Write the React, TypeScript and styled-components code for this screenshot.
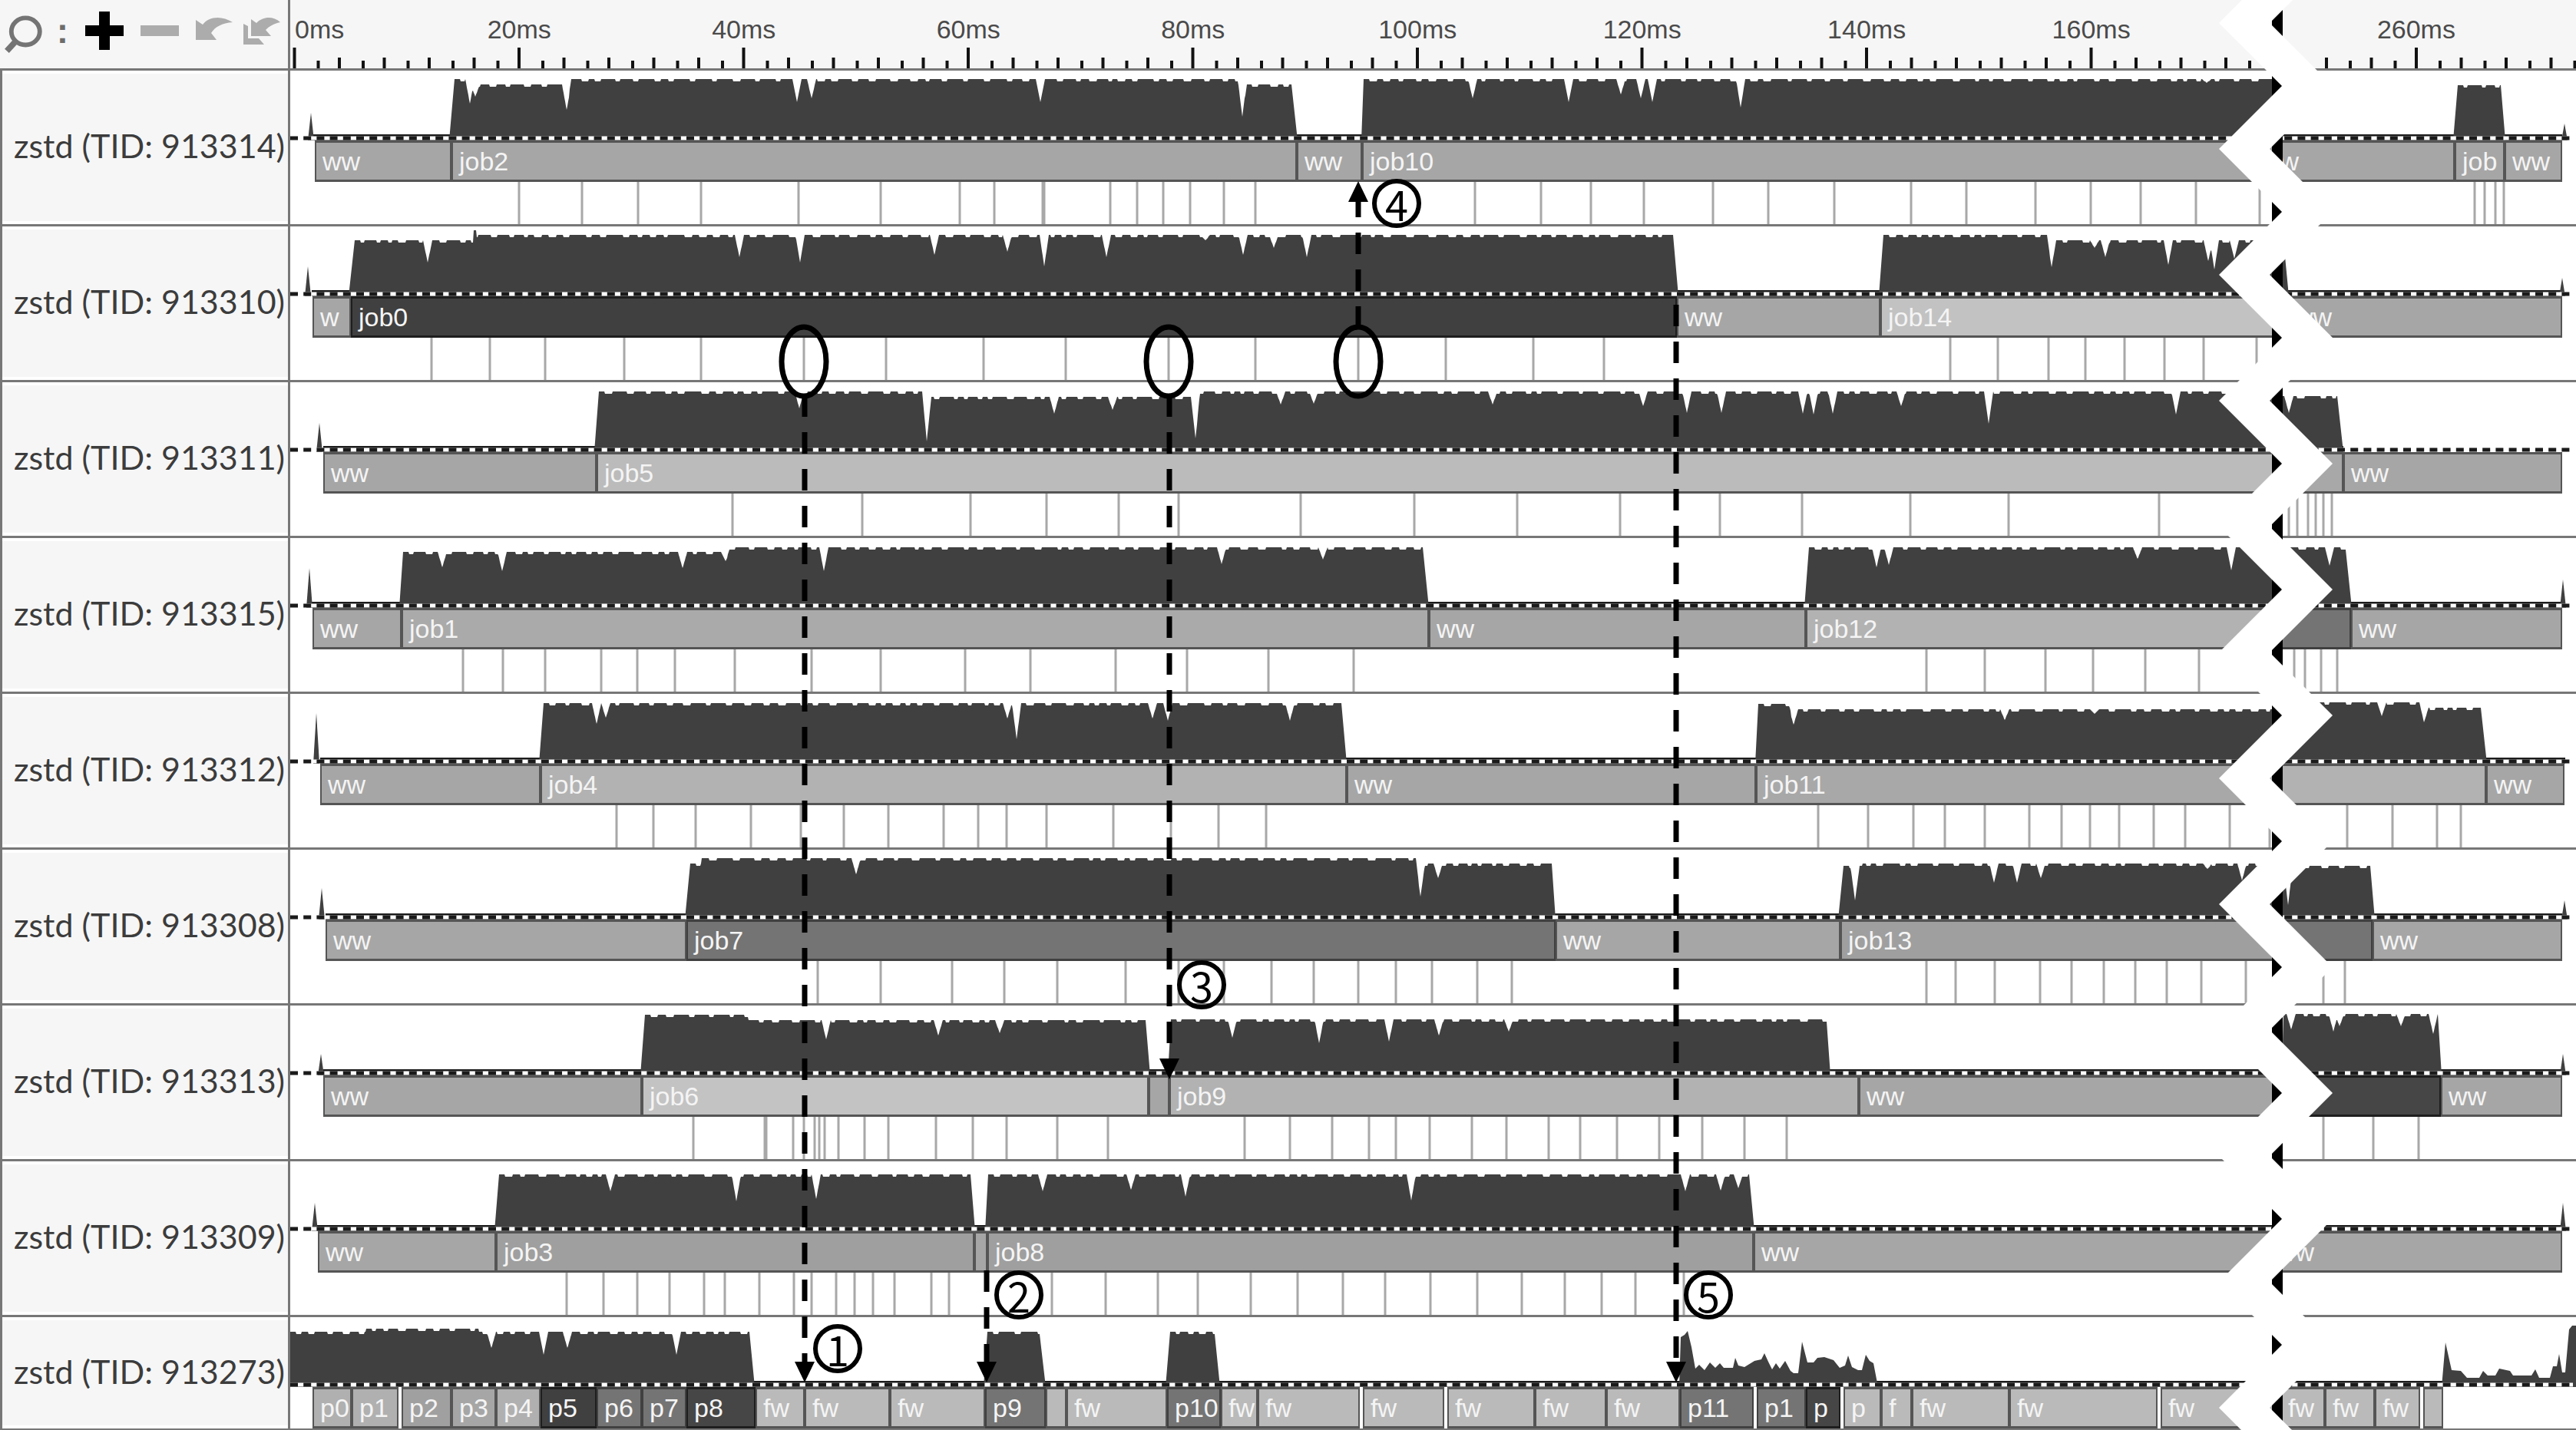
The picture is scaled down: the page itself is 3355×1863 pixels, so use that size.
import React from "react";
import styled, { createGlobalStyle } from "styled-components";

/* ---------- time axis ---------- */

const GUTTER = 378;
const SPAN = 2977;
const END = GUTTER + SPAN;
const WAVE_H = 91;

const pct = (x: number) => `${((x - GUTTER) / SPAN) * 100}%`;
const columns = (spans: number[]) => spans.map((s) => `minmax(0, ${s}fr)`).join(" ");

/* ---------- data ---------- */

type Pair = [number, number];

interface Segment {
  to: number;
  label?: string;
  tone?: string;
  gap?: boolean;
}

interface Block {
  edge: [number, number, number, number];
  levels: Pair[];
  dips: Pair[];
}

interface Thread {
  tid: number;
  start: number;
  segments: Segment[];
  band: Pair;
  spikes: Pair[];
  blocks: Block[];
  shapes?: Pair[][];
  ticks: number[];
  wideTick?: number;
}

const WAIT = "#a6a6a6";
const WRITE = "#bababa";
const MID = "#747474";
const DARK = "#404040";

const threads: Thread[] = [
  {
    tid: 913314,
    start: 410,
    segments: [
      { to: 588, label: "ww" },
      { to: 1689, label: "job2" },
      { to: 1774, label: "ww" },
      { to: 2935, label: "job10" },
      { to: 3197, label: "ww" },
      { to: 3262, label: "job" },
      { to: 3337, label: "ww" },
    ],
    band: [406, 3337],
    spikes: [[405, 55], [3340, 69]],
    blocks: [
      {
        edge: [585, 592, 1682, 1690],
        levels: [[0, 11], [616, 18], [742, 11], [1622, 18]],
        dips: [[612, 43], [619, 34], [738, 51], [1038, 41], [1057, 36], [1355, 41], [1618, 60]],
      },
      {
        edge: [1773, 1776, 2966, 2970],
        levels: [[0, 11]],
        dips: [[1918, 36], [2043, 41], [2111, 31], [2137, 36], [2152, 41], [2267, 48], [2874, 16]],
      },
      { edge: [3195, 3201, 3257, 3263], levels: [[0, 19]], dips: [] },
    ],
    ticks: [676, 758, 831, 913, 1040, 1147, 1250, 1295, 1446, 1481, 1515, 1550, 1594, 1635, 1921, 2007, 2072, 2141, 2231, 2303, 2389, 2489, 2561, 2651, 2723, 2788, 2860, 2943, 3223, 3236, 3250, 3261],
    wideTick: 1359,
  },
  {
    tid: 913310,
    start: 407,
    segments: [
      { to: 457, label: "w" },
      { to: 2184, label: "job0", tone: DARK },
      { to: 2449, label: "ww" },
      { to: 2978, label: "job14", tone: "#c2c2c2" },
      { to: 3337, label: "ww" },
    ],
    band: [406, 3337],
    spikes: [[401, 52], [3337, 67]],
    blocks: [
      {
        edge: [454, 462, 2179, 2186],
        levels: [[0, 18], [617, 2], [621, 11]],
        dips: [[557, 47], [963, 40], [1042, 47], [1217, 37], [1312, 33], [1360, 52], [1441, 40], [1570, 18], [1619, 37], [1659, 28], [1702, 40]],
      },
      {
        edge: [2447, 2453, 2974, 2981],
        levels: [[0, 11], [2670, 18]],
        dips: [[2672, 53], [2728, 28], [2742, 40], [2824, 50], [2876, 45], [2884, 56], [2910, 42]],
      },
    ],
    ticks: [562, 638, 710, 813, 913, 1047, 1154, 1281, 1388, 1522, 1635, 1769, 1883, 1997, 2089, 2540, 2602, 2668, 2716, 2767, 2819, 2870, 2939],
  },
  {
    tid: 913311,
    start: 421,
    segments: [
      { to: 777, label: "ww" },
      { to: 2965, label: "job5", tone: "#bbbbbb" },
      { to: 3052, tone: "#a8a8a8" },
      { to: 3337, label: "ww" },
    ],
    band: [421, 3052],
    spikes: [[416, 53]],
    blocks: [
      {
        edge: [774, 780, 3044, 3052],
        levels: [[0, 12], [1208, 19], [1560, 12], [2968, 18]],
        dips: [[1041, 34], [1207, 77], [1373, 41], [1449, 36], [1557, 73], [1668, 29], [1711, 28], [1944, 29], [2140, 31], [2197, 40], [2242, 40], [2348, 41], [2362, 42], [2387, 41], [2476, 31], [2590, 54], [2834, 42], [2981, 40]],
      },
    ],
    ticks: [954, 1123, 1264, 1363, 1457, 1535, 1694, 1842, 1976, 2110, 2240, 2347, 2488, 2616, 2812, 2981, 2992, 3006, 3016, 3026, 3037],
  },
  {
    tid: 913315,
    start: 407,
    segments: [
      { to: 523, label: "ww" },
      { to: 1861, label: "job1", tone: "#aaaaaa" },
      { to: 2352, label: "ww" },
      { to: 2955, label: "job12", tone: "#b2b2b2" },
      { to: 3062, tone: MID },
      { to: 3337, label: "ww" },
    ],
    band: [406, 3337],
    spikes: [[403, 39], [3338, 54]],
    blocks: [
      {
        edge: [520, 525, 1853, 1861],
        levels: [[0, 18], [948, 12]],
        dips: [[576, 38], [654, 43], [889, 39], [945, 30], [1073, 43], [1591, 34], [1723, 28]],
      },
      {
        edge: [2350, 2356, 3055, 3063],
        levels: [[0, 12]],
        dips: [[2444, 38], [2460, 35], [2784, 27], [2906, 42], [3034, 36]],
      },
    ],
    ticks: [603, 655, 710, 783, 830, 879, 957, 1057, 1147, 1257, 1342, 1453, 1546, 1652, 1763, 2509, 2585, 2664, 2726, 2794, 2864, 2988, 3002, 3023, 3044],
  },
  {
    tid: 913312,
    start: 417,
    segments: [
      { to: 704, label: "ww" },
      { to: 1754, label: "job4", tone: "#b2b2b2" },
      { to: 2287, label: "ww" },
      { to: 2948, label: "job11", tone: "#a8a8a8" },
      { to: 3238, tone: "#b2b2b2" },
      { to: 3340, label: "ww" },
    ],
    band: [417, 3341],
    spikes: [[412, 25]],
    blocks: [
      {
        edge: [702, 708, 1747, 1754],
        levels: [[0, 12]],
        dips: [[777, 39], [789, 31], [1312, 32], [1324, 59], [1501, 32], [1521, 35], [1680, 35]],
      },
      {
        edge: [2286, 2290, 3231, 3239],
        levels: [[0, 13], [2333, 20], [2980, 11], [3157, 18]],
        dips: [[2336, 40], [2611, 34], [2728, 26], [3102, 29], [3157, 37]],
      },
    ],
    ticks: [803, 851, 906, 978, 1043, 1099, 1157, 1229, 1274, 1311, 1363, 1450, 1525, 1587, 1649, 2368, 2433, 2492, 2533, 2585, 2643, 2685, 2722, 2760, 2805, 2846, 2904, 2956, 3057, 3116, 3174, 3205],
  },
  {
    tid: 913308,
    start: 424,
    segments: [
      { to: 894, label: "ww" },
      { to: 2026, label: "job7", tone: MID },
      { to: 2397, label: "ww" },
      { to: 2968, label: "job13", tone: "#9f9f9f" },
      { to: 3090, tone: MID },
      { to: 3337, label: "ww" },
    ],
    band: [424, 3337],
    spikes: [[419, 50], [3340, 66]],
    blocks: [
      {
        edge: [892, 899, 2021, 2026],
        levels: [[0, 18], [914, 11], [1848, 18]],
        dips: [[1115, 32], [1850, 61], [1873, 37]],
      },
      {
        edge: [2394, 2401, 3087, 3093],
        levels: [[0, 21], [2426, 18], [2970, 21]],
        dips: [[2416, 66], [2597, 43], [2627, 43], [2658, 37], [2875, 25], [2920, 40], [2980, 72]],
      },
    ],
    ticks: [1065, 1147, 1240, 1308, 1377, 1466, 1535, 1594, 1656, 1711, 1769, 1818, 1865, 1924, 1969, 2509, 2547, 2598, 2657, 2698, 2740, 2781, 2822, 2867, 2925, 3026, 3054],
  },
  {
    tid: 913313,
    start: 421,
    segments: [
      { to: 836, label: "ww" },
      { to: 1496, label: "job6", tone: "#c3c3c3" },
      { to: 1523 },
      { to: 2421, label: "job9", tone: "#b2b2b2" },
      { to: 2980, label: "ww" },
      { to: 3179, tone: "#464646" },
      { to: 3337, label: "ww" },
    ],
    band: [421, 3337],
    spikes: [[418, 63], [3338, 63]],
    blocks: [
      {
        edge: [834, 840, 1492, 1498],
        levels: [[0, 12], [975, 19]],
        dips: [[1076, 44], [1222, 39], [1302, 36]],
      },
      {
        edge: [1521, 1525, 2379, 2384],
        levels: [[0, 18]],
        dips: [[1605, 42], [1718, 49], [1809, 47], [1874, 39], [1965, 34]],
      },
      {
        edge: [2972, 2974, 3175, 3180],
        levels: [[0, 11]],
        dips: [[2984, 31], [3039, 34], [3047, 27], [3127, 27], [3169, 37]],
      },
    ],
    ticks: [903, 1033, 1047, 1061, 1067, 1074, 1092, 1126, 1157, 1219, 1267, 1311, 1377, 1443, 1621, 1680, 1735, 1783, 1818, 1862, 1917, 1962, 2017, 2058, 2106, 2161, 2217, 2272, 2327, 3026, 3091, 3150],
    wideTick: 997,
  },
  {
    tid: 913309,
    start: 414,
    segments: [
      { to: 646, label: "ww" },
      { to: 1269, label: "job3", tone: "#9f9f9f" },
      { to: 1286 },
      { to: 2284, label: "job8", tone: "#9f9f9f" },
      { to: 2955, label: "ww" },
      { to: 3337, label: "ww" },
    ],
    band: [412, 3337],
    spikes: [[410, 54], [3338, 54]],
    blocks: [
      {
        edge: [644, 650, 1264, 1270],
        levels: [[0, 17]],
        dips: [[795, 39], [959, 52], [1063, 49]],
      },
      {
        edge: [1283, 1287, 2278, 2285],
        levels: [[0, 17]],
        dips: [[1358, 39], [1473, 37], [1544, 46], [1838, 51], [2195, 39], [2241, 38], [2264, 35]],
      },
    ],
    ticks: [738, 786, 830, 872, 917, 944, 989, 1034, 1057, 1089, 1113, 1137, 1165, 1213, 1236, 1370, 1440, 1508, 1560, 1629, 1690, 1749, 1804, 1863, 1924, 1982, 2038, 2086, 2130, 2193],
  },
  {
    tid: 913273,
    start: 407,
    segments: [
      { to: 458, label: "p0", tone: "#b0b0b0" },
      { to: 519, label: "p1", tone: "#b0b0b0" },
      { to: 523, gap: true },
      { to: 588, label: "p2", tone: "#a0a0a0" },
      { to: 646, label: "p3", tone: WAIT },
      { to: 704, label: "p4", tone: "#b0b0b0" },
      { to: 777, label: "p5", tone: DARK },
      { to: 836, label: "p6", tone: MID },
      { to: 894, label: "p7", tone: MID },
      { to: 984, label: "p8", tone: "#464646" },
      { to: 1048, label: "fw", tone: WRITE },
      { to: 1159, label: "fw", tone: WRITE },
      { to: 1283, label: "fw", tone: WRITE },
      { to: 1362, label: "p9", tone: MID },
      { to: 1389, tone: WRITE },
      { to: 1520, label: "fw", tone: WRITE },
      { to: 1590, label: "p10", tone: MID },
      { to: 1638, label: "fw", tone: WRITE },
      { to: 1771, label: "fw", tone: WRITE },
      { to: 1775, gap: true },
      { to: 1881, label: "fw", tone: WRITE },
      { to: 1885, gap: true },
      { to: 1999, label: "fw", tone: WRITE },
      { to: 2092, label: "fw", tone: WRITE },
      { to: 2188, label: "fw", tone: WRITE },
      { to: 2284, label: "p11", tone: MID },
      { to: 2288, gap: true },
      { to: 2352, label: "p1", tone: MID },
      { to: 2397, label: "p", tone: "#464646" },
      { to: 2401, gap: true },
      { to: 2450, label: "p", tone: WRITE },
      { to: 2490, label: "f", tone: WRITE },
      { to: 2617, label: "fw", tone: WRITE },
      { to: 2810, label: "fw", tone: WRITE },
      { to: 2814, gap: true },
      { to: 2970, label: "fw", tone: WRITE },
      { to: 3028, label: "fw", tone: WRITE },
      { to: 3093, label: "fw", tone: WRITE },
      { to: 3152, label: "fw", tone: WRITE },
      { to: 3156, gap: true },
      { to: 3182, tone: WRITE },
    ],
    band: [406, 3181],
    spikes: [],
    blocks: [
      {
        edge: [378, 378, 976, 983],
        levels: [[0, 19], [477, 15], [624, 19]],
        dips: [[640, 40], [708, 49], [739, 40], [881, 49]],
      },
      { edge: [1281, 1286, 1354, 1362], levels: [[0, 19]], dips: [] },
      { edge: [1518, 1524, 1582, 1589], levels: [[0, 19]], dips: [] },
    ],
    shapes: [
      [[2187, 91], [2189, 26], [2194, 23], [2198, 18], [2203, 39], [2208, 67], [2213, 62], [2220, 69], [2227, 59], [2234, 66], [2240, 60], [2245, 66], [2257, 66], [2260, 53], [2264, 63], [2272, 65], [2285, 57], [2294, 55], [2298, 47], [2303, 58], [2308, 68], [2313, 60], [2318, 67], [2325, 57], [2332, 70], [2336, 73], [2342, 73], [2347, 32], [2354, 59], [2362, 59], [2367, 53], [2376, 52], [2388, 56], [2396, 66], [2403, 63], [2407, 50], [2412, 65], [2420, 69], [2425, 69], [2430, 49], [2435, 57], [2440, 60], [2446, 91]],
      [[3180, 91], [3185, 33], [3193, 69], [3205, 70], [3213, 79], [3229, 79], [3234, 70], [3240, 76], [3250, 76], [3255, 67], [3269, 70], [3273, 76], [3297, 76], [3302, 68], [3307, 79], [3321, 79], [3325, 64], [3330, 64], [3333, 48], [3337, 72], [3341, 72], [3346, 16], [3350, 11], [3355, 11], [3355, 91]],
    ],
    ticks: [],
  },
];

/* ---------- drawing helpers ---------- */

const toPath = (pts: Pair[]) => `M${pts.map((p) => p.join(" ")).join("L")}Z`;

function blockPath({ edge, levels, dips }: Block) {
  const [x0, x1, x2, x3] = edge;
  let seed = x0 * 7919 + x3;
  const random = () => {
    seed = (seed * 16807 + 11) % 2147483647;
    return seed / 2147483647;
  };
  const pts: Pair[] = [[x0, WAVE_H]];
  let notch = 0;
  let next = x1 + 8;
  for (let x = x1; x <= x2; x += 1) {
    if (x >= next) {
      notch = notch ? 0 : 3;
      next = x + (notch ? 4 + random() * 6 : 6 + random() * 16);
    }
    let base = levels[0][1];
    for (const [from, y] of levels) if (x >= from) base = y;
    let y = base + notch;
    for (const [dx, dy] of dips) {
      const reach = 1 - Math.abs(x - dx) / 6;
      if (reach > 0) y = Math.max(y, Math.round(base + (dy - base) * reach));
    }
    pts.push([x, y]);
  }
  pts.push([x3, WAVE_H]);
  return toPath(pts);
}

function edgeTone(tone: string) {
  if (tone === DARK || tone === "#464646") return "#1e1e1e";
  return tone === MID ? "#404040" : "#555555";
}

/* ---------- styled parts ---------- */

const Global = createGlobalStyle`
  *, *::before, *::after { box-sizing: border-box; }
  body { margin: 0; background: #fff; overflow-x: hidden; }
`;

const Board = styled.main`
  position: relative;
  display: grid;
  grid-template-columns: ${GUTTER}px minmax(0, 1fr);
  width: 100%;
  overflow: hidden;
  font-family: "Liberation Sans", Arial, sans-serif;
  color: #3c3c3c;
  background: #fff;
`;

const Toolbar = styled.div`
  display: flex;
  align-items: center;
  gap: 22px;
  height: 92px;
  padding: 0 0 10px 6px;
  background: #f6f6f6;
  border-right: 3px solid #777;
  border-bottom: 3px solid #777;
`;

const ZoomCaption = styled.div`
  display: flex;
  align-items: center;
  width: 83px;
  gap: 18px;
  font-size: 46px;
  line-height: 50px;
  font-weight: 700;
  color: #6c6c6c;
`;

const UndoGroup = styled.div`
  display: flex;
  gap: 14px;
`;

const IconButton = styled.button`
  display: block;
  flex: none;
  padding: 0;
  border: 0;
  background: none;
  line-height: 0;
  cursor: pointer;
  color: #000;

  &:disabled {
    color: #acacac;
    cursor: default;
  }
`;

const Ruler = styled.div`
  display: flex;
  flex-direction: column;
  height: 92px;
  padding-top: 16px;
  background: #f6f6f6;
  border-bottom: 3px solid #777;
`;

const RulerLabels = styled.div<{ $columns: string }>`
  display: grid;
  grid-template-columns: ${(p) => p.$columns};
  height: 44px;
`;

const RulerLabel = styled.span<{ $first?: boolean }>`
  padding-left: ${(p) => (p.$first ? 6 : 0)}px;
  text-align: ${(p) => (p.$first ? "left" : "center")};
  font-size: 34px;
  line-height: 44px;
  color: #4a4a4a;
`;

const RulerTicks = styled.svg`
  display: block;
  width: 100%;
  height: 29px;
`;

const NameCell = styled.div<{ $last: boolean }>`
  display: flex;
  align-items: center;
  padding: 0 0 4px 15px;
  border: solid #777;
  border-width: 0 3px ${(p) => (p.$last ? 2 : 3)}px 3px;
  background: #f6f6f6;
  box-shadow: inset 0 4px 0 #fff, inset 0 -4px 0 #fff;
  font-family: Lato, "Noto Sans", sans-serif;
  font-size: 43px;
  line-height: 50px;
  white-space: nowrap;
`;

const Lane = styled.div<{ $last: boolean }>`
  height: ${(p) => (p.$last ? 147 : 203)}px;
  border-bottom: ${(p) => (p.$last ? 2 : 3)}px solid #777;
`;

const Wave = styled.svg`
  display: block;
  width: 100%;
  height: ${WAVE_H}px;
`;

const Slices = styled.div<{ $columns: string }>`
  display: grid;
  grid-template-columns: ${(p) => p.$columns};
  height: 54px;
`;

const Slice = styled.div<{ $tone: string }>`
  padding-left: 8px;
  overflow: hidden;
  border: solid ${(p) => edgeTone(p.$tone)};
  border-width: 3px 2px;
  background: ${(p) => p.$tone};
  color: #f4f4f4;
  font-size: 34px;
  line-height: 48px;
  white-space: nowrap;
`;

const Marks = styled.svg`
  display: block;
  width: 100%;
  height: 55px;
`;

const Overlay = styled.div`
  position: absolute;
  inset: 0 0 0 ${GUTTER}px;
  pointer-events: none;
`;

const OverlayArt = styled.svg`
  display: block;
  width: 100%;
  height: 100%;
`;

const Badge = styled.span`
  position: absolute;
  display: flex;
  align-items: center;
  justify-content: center;
  width: 64px;
  height: 64px;
  margin: -32px 0 0 -32px;
  border: 6px solid #000;
  border-radius: 50%;
  color: #000;
  font-family: "Noto Sans CJK JP", "Noto Sans", sans-serif;
  font-size: 54px;
  line-height: 52px;
`;

/* ---------- pieces ---------- */

const axisLabels: { text?: string; span: number; first?: boolean }[] = [
  { text: "0ms", span: 152, first: true },
  ...[20, 40, 60, 80, 100, 120, 140, 160].map((n) => ({ text: `${n}ms`, span: 292.4 })),
  { span: 131 },
  { text: "260ms", span: 292 },
  { span: 62 },
];

function rulerTicks() {
  const out: [number, number][] = [];
  const add = (origin: number, from: number, to: number) => {
    for (let i = from; i <= to; i++) {
      const x = origin + Math.floor(i / 2) * 58.5 + (i % 2 !== 0 ? 31 : 0);
      out.push([x, i % 10 === 0 ? 2 : i % 2 === 0 ? 15 : 19]);
    }
  };
  add(383.5, 0, 87);
  add(3147, -4, 7);
  return out.map(([x, y]) => `M${x} ${y}V29`).join("");
}

const breakBand = (() => {
  const left: Pair[] = [];
  for (let y = -52, i = 0; y < 1950; y += 82, i++) left.push([i % 2 ? 2890 : 2972, y]);
  const right = left.map(([x, y]) => [x + 66, y] as Pair).reverse();
  return toPath([...left, ...right]);
})();

function SearchIcon() {
  return (
    <svg width="51" height="60" viewBox="0 0 51 60" fill="none" stroke="#747474" aria-hidden="true">
      <ellipse cx="28" cy="31" rx="19" ry="18" strokeWidth="6" />
      <path d="M15 44L3 57" strokeWidth="8" />
    </svg>
  );
}

function ThreadRow({ thread, last }: { thread: Thread; last: boolean }) {
  const stops = [GUTTER, thread.start, ...thread.segments.map((s) => s.to), END];
  const spans = stops.slice(1).map((x, i) => x - stops[i]);
  return (
    <>
      <NameCell $last={last}>zstd (TID: {thread.tid})</NameCell>
      <Lane $last={last}>
        <Wave viewBox={`${GUTTER} 0 ${SPAN} ${WAVE_H}`} preserveAspectRatio="none" aria-hidden="true">
          <rect x={thread.band[0]} y="83" width={thread.band[1] - thread.band[0]} height="8" fill="#1c1c1c" />
          <g fill="#404040">
            {thread.spikes.map(([x, y]) => (
              <path key={x} d={`M${x - 4} 91L${x} ${y}L${x + 4} 91Z`} />
            ))}
            {thread.blocks.map((b) => (
              <path key={b.edge[0]} d={blockPath(b)} />
            ))}
            {thread.shapes?.map((s) => (
              <path key={s[0][0]} d={toPath(s)} />
            ))}
          </g>
          <path d={`M${GUTTER} 88H${END - 4}`} stroke="#fff" strokeWidth="5" />
          <path d={`M${GUTTER} 88H${END - 4}`} stroke="#1a1a1a" strokeWidth="5" strokeDasharray="10 7.2" />
        </Wave>
        <Slices $columns={columns(spans)}>
          <span />
          {thread.segments.map((s) =>
            s.gap ? (
              <span key={s.to} />
            ) : (
              <Slice key={s.to} $tone={s.tone ?? WAIT}>
                {s.label}
              </Slice>
            )
          )}
        </Slices>
        {!last && (
          <Marks viewBox={`${GUTTER} 0 ${SPAN} 55`} preserveAspectRatio="none" stroke="#a8a8a8" aria-hidden="true">
            <path d={thread.ticks.map((x) => `M${x} 0V55`).join("")} strokeWidth="3" />
            {thread.wideTick && <path d={`M${thread.wideTick} 0V55`} strokeWidth="5" />}
          </Marks>
        )}
      </Lane>
    </>
  );
}

const arrows = [
  { x: 1048, from: 515, base: 1774, tip: 1801 },
  { x: 1523, from: 515, base: 1379, tip: 1406 },
  { x: 1769, from: 427, base: 263, tip: 236 },
  { x: 1285, from: 1655, base: 1774, tip: 1801 },
  { x: 2183, from: 397, base: 1774, tip: 1801 },
];

const badges = [
  { n: 1, x: 1091, y: 1757 },
  { n: 2, x: 1327, y: 1687 },
  { n: 3, x: 1565, y: 1283 },
  { n: 4, x: 1819, y: 265 },
  { n: 5, x: 2225, y: 1687 },
];

export default function App() {
  return (
    <>
      <Global />
      <Board>
        <Toolbar>
          <ZoomCaption>
            <SearchIcon />:
          </ZoomCaption>
          <IconButton type="button" aria-label="Zoom in">
            <svg width="50" height="50" viewBox="0 0 50 50" fill="currentColor">
              <path d="M18 0H32V18H50V32H32V50H18V32H0V18H18Z" />
            </svg>
          </IconButton>
          <IconButton type="button" aria-label="Zoom out" disabled>
            <svg width="50" height="50" viewBox="0 0 50 50" fill="currentColor">
              <path d="M0 18H50V32H0Z" />
            </svg>
          </IconButton>
          <UndoGroup>
            <IconButton type="button" aria-label="Undo zoom" disabled>
              <svg width="48" height="40" viewBox="0 0 48 40" fill="currentColor">
                <path d="M0 6L9 12C17 1 34 0 48 9C34 10 25 15 20 23L27 32H0Z" />
              </svg>
            </IconButton>
            <IconButton type="button" aria-label="Reset zoom" disabled>
              <svg width="48" height="40" viewBox="0 0 48 40" fill="currentColor">
                <path d="M0 11L6 14V30H20L27 38H0Z" />
                <path d="M10 5L17 10C26 1 39 1 48 9C39 11 34 14 29 19L36 27H10Z" />
              </svg>
            </IconButton>
          </UndoGroup>
        </Toolbar>
        <Ruler>
          <RulerLabels $columns={columns(axisLabels.map((l) => l.span))}>
            {axisLabels.map((l, i) => (
              <RulerLabel key={i} $first={l.first}>
                {l.text}
              </RulerLabel>
            ))}
          </RulerLabels>
          <RulerTicks viewBox={`${GUTTER} 0 ${SPAN} 29`} preserveAspectRatio="none" aria-hidden="true">
            <path d={rulerTicks()} stroke="#111" strokeWidth="4" />
          </RulerTicks>
        </Ruler>
        {threads.map((t, i) => (
          <ThreadRow key={t.tid} thread={t} last={i === threads.length - 1} />
        ))}
        <Overlay>
          <OverlayArt viewBox={`${GUTTER} 0 ${SPAN} 1863`} preserveAspectRatio="none" aria-hidden="true">
            <path d="M2959 0H2973V1863H2959Z" fill="#000" />
            <path d={breakBand} fill="#fff" />
            <g fill="none" stroke="#000" strokeWidth="7">
              <ellipse cx="1047" cy="471" rx="29" ry="45" />
              <ellipse cx="1522" cy="471" rx="29" ry="45" />
              <ellipse cx="1769" cy="471" rx="29" ry="45" />
              {arrows.map((a) => (
                <path key={a.x} d={`M${a.x} ${a.from}V${a.base}`} strokeDasharray="28 20" />
              ))}
            </g>
            {arrows.map((a) => (
              <path key={a.x} d={`M${a.x - 13} ${a.base}H${a.x + 13}L${a.x} ${a.tip}Z`} fill="#000" />
            ))}
          </OverlayArt>
          {badges.map((b) => (
            <Badge key={b.n} style={{ left: pct(b.x), top: b.y }}>
              {b.n}
            </Badge>
          ))}
        </Overlay>
      </Board>
    </>
  );
}
